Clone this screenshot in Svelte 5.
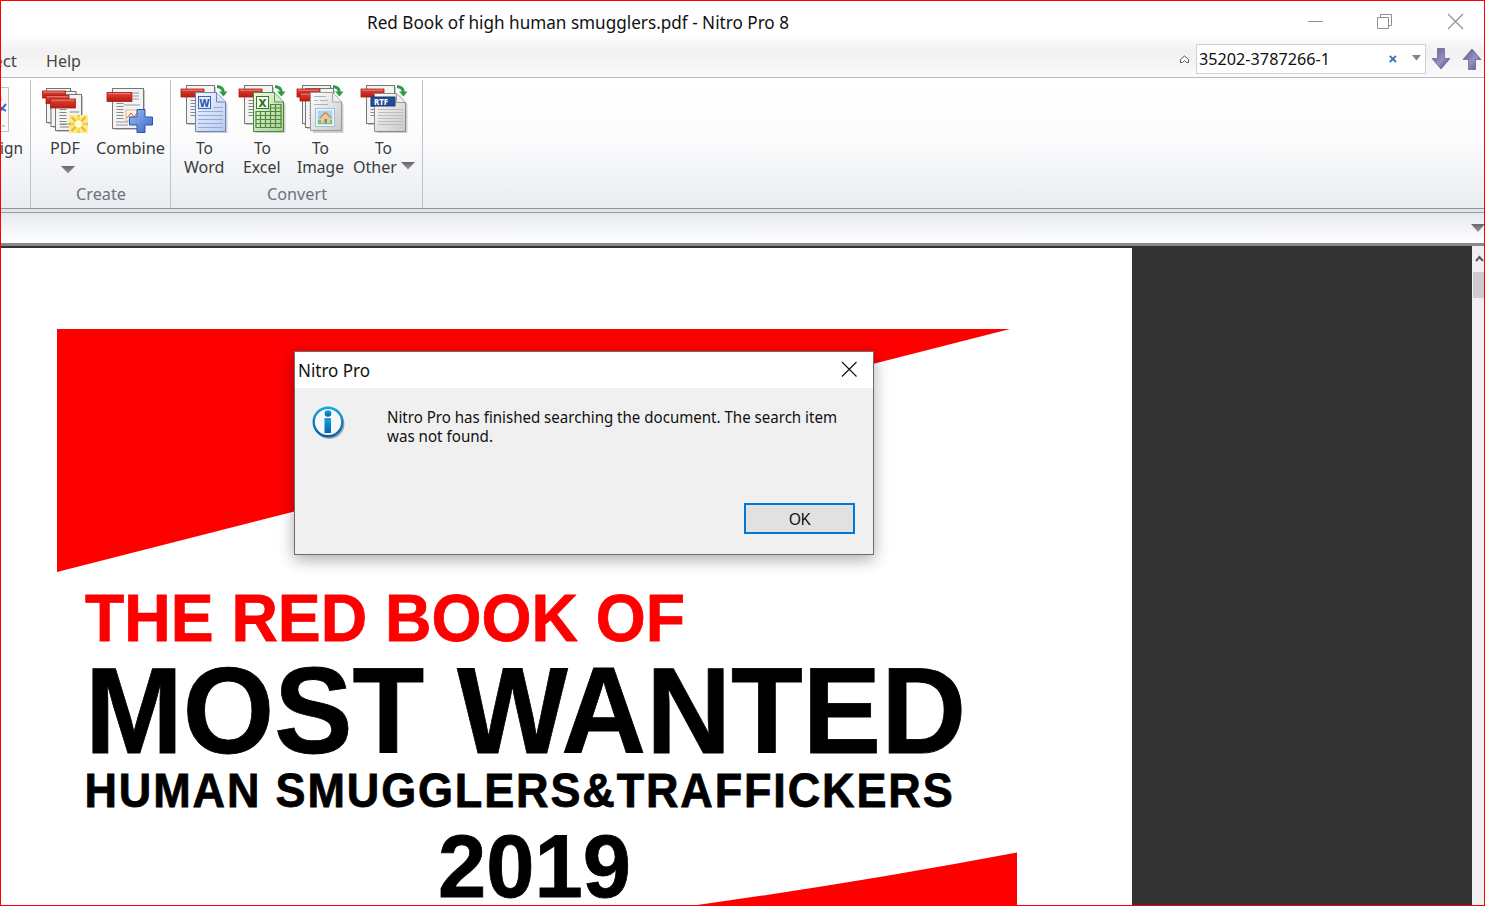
<script>
  const convert = [
    { kind: 'word', label: 'Word', w: 40.5, width: 58 },
    { kind: 'excel', label: 'Excel', w: 37.5, width: 58 },
    { kind: 'image', label: 'Image', w: 47, width: 58 },
    { kind: 'other', label: 'Other', w: 44, width: 69 }
  ];
</script>

{#snippet label(text, w, size = 17, fill = '#3b3b3b', h = 19, base = 16)}
  <svg class="label" width={w} height={h}>
    <text x="0" y={base} font-size={size} {fill} textLength={w} lengthAdjust="spacingAndGlyphs">{text}</text>
  </svg>
{/snippet}

{#snippet sheet(x, y, w, h)}
  <rect x={x + 1.5} y={y + 1.5} width={w} height={h} fill="#000" opacity=".22" />
  <rect {x} {y} width={w} height={h} fill="#f3f3f3" stroke="#777" />
  <path d="M{x + 4} {y + 15}H{x + 11}M{x + 4} {y + 18}H{x + 11}M{x + 4} {y + 21}H{x + 11}M{x + 4} {y + 24}H{x + 11}M{x + 4} {y + 27}H{x + 11}M{x + 4} {y + 30}H{x + 11}" stroke="#888" />
{/snippet}

{#snippet tag(x, y, w, h)}
  <rect {x} {y} width={w} height={h} fill="url(#tagred)" stroke="#a81f16" stroke-width=".8" />
  <path d="M{x + 0.8} {y + 1.2}H{x + w - 1}" stroke="#ee8176" stroke-width="1" />
{/snippet}

{#snippet turn()}
  <path d="M37 2.500Q43 3 43.300 8" fill="none" stroke="#2d9b45" stroke-width="3" />
  <path d="M39 7.500H47.500L43.500 12.500Z" fill="#2d9b45" />
{/snippet}

<svg class="defs" width="0" height="0">
  <defs>
    <linearGradient id="tagred" x2="0" y2="1"><stop stop-color="#dc4437" /><stop offset="1" stop-color="#bd1a10" /></linearGradient>
    <linearGradient id="plusblue" x2="1" y2="1"><stop stop-color="#9dbcf5" /><stop offset="1" stop-color="#3866c9" /></linearGradient>
    <linearGradient id="wordp" x2="1" y2="1"><stop stop-color="#f4f8ff" /><stop offset="1" stop-color="#b9cbed" /></linearGradient>
    <linearGradient id="excelp" x2="1" y2="1"><stop stop-color="#f1fae9" /><stop offset="1" stop-color="#a8cd91" /></linearGradient>
    <linearGradient id="greyp" x2="1" y2="1"><stop stop-color="#ffffff" /><stop offset="1" stop-color="#c8c8c8" /></linearGradient>
    <linearGradient id="arrowp" x2="1" y2="1"><stop stop-color="#5f5683" /><stop offset=".55" stop-color="#9590c6" /><stop offset="1" stop-color="#51466f" /></linearGradient>
    <linearGradient id="info" x2="0" y2="1"><stop stop-color="#16a4df" /><stop offset="1" stop-color="#0562a8" /></linearGradient>
    <linearGradient id="tri" x2="0" y2="1"><stop stop-color="#686868" /><stop offset="1" stop-color="#999" /></linearGradient>
  </defs>
</svg>

<div class="window">
  <header class="titlebar">
    <div class="title">{@render label('Red Book of high human smugglers.pdf - Nitro Pro 8', 422, 18, '#111', 24, 19)}</div>
    <div class="controls">
      <svg width="15" height="16"><path d="M0 8.500H15" stroke="#909090" /></svg>
      <svg class="restore" width="15" height="16"><path d="M.5 4.500H11.500V15.500H.5ZM3.500 4.500V1.500H14.500V12.500H11.500" fill="none" stroke="#909090" /></svg>
      <svg width="15" height="16"><path d="M0 1L15 16M15 1L0 16" stroke="#909090" stroke-width="1.200" /></svg>
    </div>
  </header>

  <nav class="menubar">
    <div class="cut">{@render label('ect', 24, 17, '#454545')}</div>
    <div class="help">{@render label('Help', 35, 17, '#454545')}</div>
    <div class="search">
      <svg class="collapse" width="11" height="9"><path d="M1.500 4.500L5.500 1L9.500 4.500V7.500H7.500L5.500 5.500L3.500 7.500H1.500Z" fill="#fff" stroke="#555" /></svg>
      <div class="field">
        {@render label('35202-3787266-1', 131, 17, '#111')}
        <svg class="clear" width="8" height="8"><path d="M.8 .8L7 7M7 .8L.8 7" stroke="#3675b5" stroke-width="1.800" /></svg>
        <svg class="drop" width="9" height="6"><path d="M0 0H9L4.500 5.500Z" fill="#858585" /></svg>
      </div>
      <svg class="down" width="20" height="22"><path d="M6.500 .5H13.500V10.500H19L10 21L1 10.500H6.500Z" fill="url(#arrowp)" stroke="#675d8c" stroke-width=".7" /></svg>
      <svg class="up" width="20" height="22"><path d="M6.500 21.500H13.500V11.500H19L10 1L1 11.500H6.500Z" fill="url(#arrowp)" stroke="#675d8c" stroke-width=".7" /></svg>
    </div>
  </nav>

  <section class="ribbon">
    <div class="group edge">
      <svg class="signicon" width="11" height="49" viewBox="0 0 11 49">
        <path d="M0 3.500H8.500V47.500H0" fill="#fafafa" stroke="#c9c0b5" />
        <path d="M0 10Q3 15 0 20" fill="none" stroke="#f3b0a8" />
        <path d="M0 23L6 27M0 27L6 20" stroke="#356bc5" stroke-width="2" /><path d="M2 42H5" stroke="#999" />
      </svg>
      <div class="ign">{@render label('ign', 23)}</div>
    </div>

    <div class="group create">
      <div class="buttons">
        <button class="tool" style:width="50px">
          <svg class="icon" width="48" height="50">
            {@render sheet(5.5, 4.5, 24, 34)}{@render sheet(10, 7.5, 25, 35)}{@render sheet(14.5, 10.5, 26, 36)}
            <path d="M29 28H38M19 40H28M19 43H28" stroke="#888" />
            {@render tag(1.5, 7, 23, 7)}{@render tag(5, 11.5, 23, 8)}{@render tag(9.5, 15, 25, 9)}
            <rect x="28" y="31" width="19" height="18" fill="#fbe994" />
            <path d="M37.500 31V49M28 40H47M30.500 33L44.500 47M44.500 33L30.500 47" stroke="#efb91e" stroke-width="2.300" />
            <path d="M37.500 32V48M30 40H46" stroke="#ffef65" stroke-width="1.200" /><circle cx="37.500" cy="40" r="3.800" fill="#fffbd2" />
          </svg>
          {@render label('PDF', 30)}
          <svg class="pdfdrop" width="14" height="8"><path d="M0 0H14L7 7.500Z" fill="url(#tri)" /></svg>
        </button>
        <button class="tool" style:width="80px">
          <svg class="icon" width="48" height="50">
            {@render sheet(6.5, 4.5, 31, 40)}
            <path d="M27 9H33M27 12H33M27 15H33M18 21H34M10 38H22M10 41H22" stroke="#999" />
            <rect x="20" y="26" width="13" height="11" fill="#fff2df" stroke="#d7b78e" /><path d="M21 34L25 29L28 33L32 28" fill="none" stroke="#d85b40" />
            {@render tag(1, 8.5, 25, 9)}
            <path d="M31 25.500H39V33H46.500V41H39V48.500H31V41H23.500V33H31Z" fill="url(#plusblue)" stroke="#2b57b4" />
          </svg>
          {@render label('Combine', 69)}
        </button>
      </div>
      <div class="caption createcap">{@render label('Create', 50, 17, '#6b7280')}</div>
    </div>

    <div class="group convert">
      <div class="buttons">
        {#each convert as item}
          <button class="tool" style:width="{item.width}px">
            <svg class="icon" width="48" height="50">
              {@render sheet(6.5, 1.5, 28, 38)}
              {#if item.kind === 'image'}{@render sheet(9.5, 4.5, 28, 39)}{/if}
              {@render tag(1, 5, 23, 8)}
              {#if item.kind === 'image'}{@render tag(4, 9, 13, 8)}{/if}
              <path d="M17 11H40L47.500 20V49H17Z" fill="#000" opacity=".18" />
              {#if item.kind === 'word'}
                <path d="M15.500 8.500H36.500L45.500 18V47.500H15.500Z" fill="url(#wordp)" stroke="#6985bc" />
                <path d="M36.500 8.500V18H45.500" fill="#d5e1f6" stroke="#6985bc" />
                <path d="M18 27.500H43M18 31.500H43M18 35.500H43M18 39.500H43M18 43.500H43M33 23.500H43" stroke="#91abdc" />
                <rect x="18.500" y="12.500" width="12" height="12" fill="#e1ebff" stroke="#4264af" />
                <text x="19.500" y="22.500" font-size="11" font-weight="800" fill="#3155ad" textLength="10" lengthAdjust="spacingAndGlyphs">W</text>
              {:else if item.kind === 'excel'}
                <path d="M15.500 8.500H36.500L45.500 18V47.500H15.500Z" fill="url(#excelp)" stroke="#49893d" />
                <path d="M36.500 8.500V18H45.500" fill="#d5eccb" stroke="#5a974d" />
                <path d="M18 27.500H43M18 31.500H43M18 35.500H43M18 39.500H43M32 20.500H43V43.500H18V27M32 24H43M22.500 27V43M27.500 27V43M32.500 20V43M37.500 20V43" fill="none" stroke="#4a893c" stroke-width="1.200" />
                <rect x="18.500" y="12.500" width="12" height="12" fill="#f7fff2" stroke="#38752e" />
                <text x="20.500" y="22.500" font-size="11" font-weight="800" fill="#2c7423" textLength="8" lengthAdjust="spacingAndGlyphs">X</text>
              {:else if item.kind === 'image'}
                <path d="M14.500 8.500H36.500L45.500 18V46.500H14.500Z" fill="url(#greyp)" stroke="#999" />
                <path d="M36.500 8.500V18H45.500" fill="#eee" stroke="#aaa" />
                <path d="M18 12.500H30M18 16.500H22M24 16.500H32M18 20.500H32" stroke="#aab2bd" />
                <rect x="19.500" y="24.500" width="19" height="18" fill="#ecf7ff" stroke="#9dc0d6" />
                <rect x="21.500" y="26.500" width="15" height="14" fill="#a8d7f2" /><path d="M22 36H36V40H22Z" fill="#91ba68" />
                <path d="M25 33V39H34V33L29.500 29Z" fill="#e7cb91" /><path d="M23.500 34L29.500 28.500L35.500 34" fill="none" stroke="#c78a63" stroke-width="1.500" /><path d="M28.500 35H31V39H28.500Z" fill="#698dab" />
              {:else}
                <path d="M14.500 9.500H36.500L45.500 18.500V47.500H14.500Z" fill="url(#greyp)" stroke="#8b8b8b" />
                <path d="M36.500 9.500V18.500H45.500" fill="#eee" stroke="#999" />
                <path d="M18 25.500H43M18 28.500H43M18 31.500H43M18 34.500H43M18 37.500H43M18 40.500H43" stroke="#bdbdbd" />
                <rect x="11" y="13" width="24" height="9" fill="#214c91" stroke="#173d7a" />
                <text x="14" y="20.500" font-size="8.500" font-weight="800" fill="#fff" textLength="14" lengthAdjust="spacingAndGlyphs">RTF</text>
              {/if}
              {@render turn()}
            </svg>
            {@render label('To', 17)}
            <span class="second">
              {@render label(item.label, item.w)}
              {#if item.kind === 'other'}<svg width="14" height="8"><path d="M0 0H14L7 7.500Z" fill="url(#tri)" /></svg>{/if}
            </span>
          </button>
        {/each}
      </div>
      <div class="caption convertcap">{@render label('Convert', 60, 17, '#6b7280')}</div>
    </div>
  </section>

  <div class="tabstrip"><svg width="14" height="8"><path d="M0 0H14L7 8Z" fill="url(#tri)" /></svg></div>

  <main class="viewer">
    <div class="page">
      <svg class="poster" width="960" height="577" viewBox="57 329 960 577">
        <path d="M57 329H1010L57 572Z" fill="#fe0000" />
        <path d="M690 906Q850 884 1017 852.500V906Z" fill="#fe0000" />
        <g font-family="Liberation Sans, Arial, sans-serif" font-weight="700" stroke-width=".8">
          <text x="85" y="641" font-size="67.500" fill="#fe0000" stroke="#fe0000" textLength="600" lengthAdjust="spacingAndGlyphs">THE RED BOOK OF</text>
          <text x="85" y="753" font-size="123" stroke="#000" textLength="881" lengthAdjust="spacingAndGlyphs">MOST WANTED</text>
          <text x="84.500" y="807" font-size="48" letter-spacing="2" stroke="#000" textLength="870" lengthAdjust="spacingAndGlyphs">HUMAN SMUGGLERS&amp;TRAFFICKERS</text>
          <text x="438" y="897" font-size="89" stroke="#000" textLength="193" lengthAdjust="spacingAndGlyphs">2019</text>
        </g>
      </svg>
    </div>
    <div class="scrollbar">
      <svg width="12" height="26"><path d="M3 15L6.500 11L10 15" fill="none" stroke="#555" stroke-width="2" /></svg>
      <div class="thumb"></div>
    </div>
  </main>

  <div class="dialog" role="dialog" aria-label="Nitro Pro">
    <div class="dtitle">
      {@render label('Nitro Pro', 72, 18, '#111', 24, 18)}
      <svg width="16" height="16"><path d="M1 1L15.500 15.500M15.500 1L1 15.500" stroke="#111" stroke-width="1.100" /></svg>
    </div>
    <div class="message">
      <svg width="34" height="34">
        <circle cx="17.500" cy="18" r="15" fill="#000" opacity=".3" />
        <circle cx="16" cy="16" r="14.300" fill="#f5f7f9" stroke="url(#info)" stroke-width="2.400" />
        <circle cx="16" cy="7.500" r="3.300" fill="url(#info)" /><path d="M12.500 12H19V27H12.500Z" fill="url(#info)" />
      </svg>
      <div class="copy">
        {@render label('Nitro Pro has finished searching the document. The search item', 450, 16.5, '#111')}
        {@render label('was not found.', 106, 16.5, '#111')}
      </div>
    </div>
    <button class="ok">{@render label('OK', 22, 16.5, '#111', 20, 16)}</button>
  </div>
  <div class="frame"></div>
</div>

<style>
  :global(body) { margin: 0; overflow: hidden; }
  * { box-sizing: border-box; }
  svg { display: block; flex: none; }
  .defs { position: absolute; }
  .label { overflow: visible; }
  .window { position: relative; width: 1485px; height: 906px; overflow: hidden; background: #fff; display: flex; flex-direction: column; font-family: "Noto Sans", "Open Sans", sans-serif; }
  .frame { position: absolute; inset: 0; border: 1px solid #f00; pointer-events: none; }
  .titlebar { height: 34px; display: flex; justify-content: space-between; padding: 10px 22px 0 367px; }
  .controls { display: flex; gap: 55px; padding-top: 3px; }
  .controls svg { overflow: visible; }
  .controls .restore { margin: 0 1px 0 -1px; }
  .menubar { height: 44px; display: flex; background: linear-gradient(#fff, #f1f1f1 40%, #fafafa); border-bottom: 1px solid #b6bcc2; }
  .cut { width: 46px; margin-left: -7px; padding-top: 17px; }
  .help { margin-left: 7px; padding-top: 17px; }
  .search { margin-left: auto; display: flex; align-items: flex-start; padding-top: 10px; }
  .collapse { margin: 11px 6px 0 0; }
  .field { width: 230px; height: 30px; background: #fff; border: 1px solid #ced2d7; display: flex; align-items: center; padding: 0 4px 0 2px; }
  .field .label { margin-bottom: 2px; }
  .clear { margin-left: auto; margin-right: 15px; }
  .drop { margin-bottom: 2px; }
  .down { margin: 4px 0 0 5px; }
  .up { margin: 4px 3px 0 11px; }
  .ribbon { height: 131px; display: flex; background: linear-gradient(#fff, #fcfcfd 45%, #e9ecf0); border-bottom: 1px solid #8e9399; }
  .group { border-right: 1px solid #bec3c9; height: 128px; margin-top: 2px; }
  .edge { width: 31px; padding-top: 4px; overflow: hidden; }
  .ign { padding-top: 5px; }
  .create { width: 140px; padding: 4px 0 0 9px; }
  .convert { width: 252px; padding: 4px 0 0 4px; }
  .buttons { display: flex; height: 99px; }
  .tool { border: 0; padding: 0; margin: 0; background: none; display: flex; flex-direction: column; align-items: center; font: inherit; flex: none; }
  .icon { margin-bottom: 4px; overflow: visible; }
  .pdfdrop { margin: 9px 0 0 6px; }
  .second { display: flex; gap: 4px; }
  .second svg:not(.label) { margin-top: 5px; }
  .caption { padding-top: 1px; }
  .createcap { margin-left: 36px; }
  .convertcap { margin-left: 92px; }
  .tabstrip { height: 37px; border-top: 3px solid #e3e6e9; border-bottom: 3px solid #858a8e; background: linear-gradient(#999da2 1px, #e5e9ee 1px, #fff); display: flex; justify-content: flex-end; padding-top: 12px; }
  .viewer { height: 660px; background: #333; display: flex; justify-content: space-between; }
  .page { width: 1132px; background: #fff; margin-top: 2px; padding: 81px 0 0 57px; }
  .scrollbar { width: 13px; background: #f0f0f0; padding-left: 1px; }
  .thumb { height: 26px; background: #cdcdcd; }
  .dialog { position: absolute; left: 294px; top: 351px; width: 580px; height: 204px; border: 1px solid #6b6b6b; background: #f0f0f0; box-shadow: 0 5px 15px rgba(0,0,0,.32); display: flex; flex-direction: column; }
  .dtitle { height: 36px; background: #fff; display: flex; justify-content: space-between; padding: 7px 16px 0 3px; }
  .dtitle svg:last-child { margin-top: 2px; }
  .message { display: flex; padding: 18px 0 0 17px; height: 115px; }
  .copy { margin: 1px 0 0 41px; }
  .ok { align-self: flex-end; margin-right: 18px; width: 111px; height: 31px; border: 2px solid #0078d7; background: #e1e1e1; padding: 4px 0 0; display: flex; justify-content: center; align-items: flex-start; }
</style>
